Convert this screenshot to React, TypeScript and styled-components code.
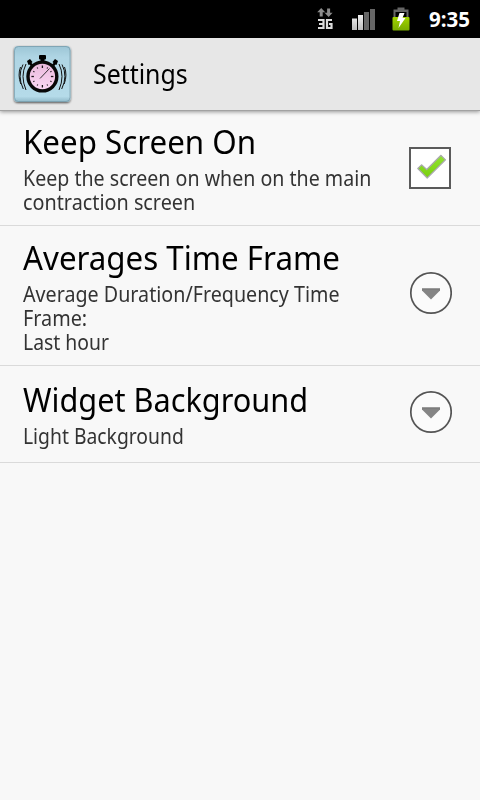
import React from 'react';
import styled, { createGlobalStyle } from 'styled-components';

const GlobalStyle = createGlobalStyle`
  * { box-sizing: border-box; }
  body { margin: 0; background: #f8f8f8; font-family: "Noto Sans", "Open Sans", sans-serif; }
`;

const Screen = styled.div`
  width: 480px;
  height: 800px;
  background: #f8f8f8;
  overflow: hidden;
  display: flex;
  flex-direction: column;
`;

const StatusBar = styled.div`
  height: 38px;
  flex: none;
  background: #000;
  display: flex;
  align-items: center;
  padding-left: 314px;
`;

const StatusIcons = styled.svg`
  display: block;
  flex: none;
`;

const Clock = styled.span`
  margin-left: 11px;
  color: #fff;
  font: 700 20.5px/38px "Open Sans", sans-serif;
  white-space: nowrap;
`;

const Header = styled.header`
  height: 73px;
  flex: none;
  background: #e7e7e7;
  border-bottom: 1px solid #a2a2a2;
  box-shadow: 0 1px 4px rgba(0, 0, 0, 0.4);
  display: flex;
  align-items: center;
  padding-left: 10px;
`;

const AppIcon = styled.svg`
  display: block;
  flex: none;
  margin-right: 19px;
`;

const Line = styled.span<{ $squeeze: number }>`
  display: block;
  width: max-content;
  white-space: nowrap;
  transform: scaleX(${(p) => p.$squeeze});
  transform-origin: 0 50%;
`;

const Heading = styled.h1`
  margin: 0;
  font-size: 27px;
  line-height: 36px;
  font-weight: 400;
  color: #000;
`;

const List = styled.main`
  display: flex;
  flex-direction: column;
`;

const Row = styled.section<{ $height: number }>`
  height: ${(p) => p.$height}px;
  flex: none;
  border-bottom: 1px solid #dadada;
  display: flex;
  align-items: center;
  justify-content: space-between;
  padding: 0 28px 0 23px;
`;

const Texts = styled.div<{ $drop: number }>`
  width: 360px;
  margin-top: ${(p) => p.$drop}px;
`;

const Title = styled.h2`
  margin: 0;
  padding-bottom: 5px;
  font-size: 33px;
  line-height: 36px;
  font-weight: 400;
  color: #000;
`;

const Summary = styled.div`
  font-size: 22px;
  line-height: 24px;
  color: #333;
`;

const Control = styled.svg<{ $lift?: number }>`
  display: block;
  flex: none;
  margin-bottom: ${(p) => p.$lift ?? 0}px;
`;

type Text = [string, number];

function StatusGlyphs() {
  return (
    <StatusIcons width="104" height="38" viewBox="314 0 104 38">
      <defs>
        <linearGradient id="charge" x1="0" y1="0" x2="0" y2="1">
          <stop offset="0" stopColor="#a2d400" />
          <stop offset="1" stopColor="#79ac00" />
        </linearGradient>
        <linearGradient id="bar" x1="0" y1="0" x2="0" y2="1">
          <stop offset="0" stopColor="#f0f0f0" />
          <stop offset="1" stopColor="#bdbdbd" />
        </linearGradient>
      </defs>
      <path d="M321.200 8l4 4.200h-2.500v4.200h-3v-4.200h-2.500z M328.600 17l-4-4.200h2.500v-4.200h3v4.200h2.500z" fill="#8b8b8b" />
      <path d="M318 20h5.500v8h-5.500 M319 24h4.500 M332 20h-5v8h4.500v-4h-2.500" fill="none" stroke="#dcdcdc" strokeWidth="2.200" />
      <path d="M352 18.500h5v11.500h-5z M358 15h5v15h-5z" fill="url(#bar)" />
      <path d="M364 12h5v18h-5z M370 9h5v21h-5z" fill="#666" />
      <path d="M397.500 9.500v-2h7v2h4v7.500h-2v-5h-11v5h-2v-7.500z" fill="#666" />
      <rect x="392.500" y="17" width="17" height="13.500" rx="1" fill="url(#charge)" />
      <path d="M399.500 13h5l-2 5h3l-7 10 1.500-7h-3z" fill="#fff" />
    </StatusIcons>
  );
}

function Stopwatch() {
  const ticks = Array.from({ length: 12 }, (_, i) => i * 30);
  return (
    <AppIcon width="64" height="64" viewBox="10 42 64 64">
      <defs>
        <linearGradient id="tile" x1="0" y1="0" x2="0" y2="1">
          <stop offset="0" stopColor="#9cc5d5" />
          <stop offset="0.2" stopColor="#afd5e4" />
          <stop offset="0.9" stopColor="#b5dbe9" />
          <stop offset="1" stopColor="#8fb8c8" />
        </linearGradient>
        <linearGradient id="face" x1="0" y1="0" x2="0" y2="1">
          <stop offset="0" stopColor="#e9b9dc" />
          <stop offset="1" stopColor="#fbd8f4" />
        </linearGradient>
        <filter id="tileShadow" x="-20%" y="-20%" width="140%" height="140%">
          <feDropShadow dx="0" dy="1" stdDeviation="1.200" floodOpacity="0.65" />
        </filter>
      </defs>
      <rect x="14" y="46" width="56.500" height="56" rx="4" fill="url(#tile)" filter="url(#tileShadow)" />
      <rect x="14.500" y="46.500" width="55.500" height="55" rx="4" fill="none" stroke="#6c8f9e" strokeOpacity="0.6" />
      <rect x="39" y="55" width="7" height="4.500" rx="1" />
      <path d="M40.500 59h4v4h-4z" />
      <path d="M27 61l3-2 2.500 3-1 1 2.500 2.500-2 2-2.500-3-1 .500z M58 61l-3-2-2.500 3 1 1-2.500 2.500 2 2 2.500-3 1 .500z" />
      <circle cx="42.400" cy="76.500" r="14.400" fill="url(#face)" stroke="#080808" strokeWidth="3.400" />
      {ticks.map((a) => (
        <path
          key={a}
          d={a % 90 === 0 ? 'M42.400 65.500v2.500' : 'M42.400 66v1.300'}
          stroke="#1a1418"
          strokeWidth={a % 90 === 0 ? 1.3 : 1.1}
          transform={`rotate(${a} 42.400 76.500)`}
        />
      ))}
      <path d="M40 78.500l9.500-10" stroke="#222" strokeWidth="0.9" />
      <path d="M26 64q-6 12 0 26 M23 64.500q-6 11.500 .300 24.500 M20.500 67q-3 8 .300 17 M59 64q6 12 0 26 M62 64.500q6 11.500-.300 24.500 M64.500 67q3 8-.300 17" fill="none" stroke="#111" strokeWidth="1" />
    </AppIcon>
  );
}

function Checkbox() {
  return (
    <Control width="44" height="44" viewBox="408 146 44 44">
      <defs>
        <linearGradient id="tick" x1="0" y1="0" x2="0" y2="1">
          <stop offset="0" stopColor="#92e235" />
          <stop offset="1" stopColor="#79cf0c" />
        </linearGradient>
      </defs>
      <rect x="410" y="148" width="40" height="40" fill="#fff" stroke="#5b5b5b" strokeWidth="2" />
      <path d="M417.800 168.500l3.700-3.700 5.200 4.700 14.300-14.200 4.500 4.500-18.300 18.200z" fill="url(#tick)" stroke="#aaa9ae" strokeWidth="1.200" strokeLinejoin="round" />
    </Control>
  );
}

function DropButton() {
  return (
    <Control $lift={5} width="44" height="44" viewBox="0 0 44 44">
      <circle cx="23" cy="22" r="20.200" fill="#fbfbfb" stroke="#555" strokeWidth="1.700" />
      <path d="M14 17.500h18v2l-9 9-9-9z" fill="#858585" />
      <path d="M14 18h18" stroke="#777" />
    </Control>
  );
}

interface SettingProps {
  height: number;
  title: Text;
  lines: Text[];
  drop?: number;
  children: React.ReactNode;
}

function Setting({ height, title, lines, drop = 0, children }: SettingProps) {
  return (
    <Row $height={height}>
      <Texts $drop={drop}>
        <Title>
          <Line $squeeze={title[1]}>{title[0]}</Line>
        </Title>
        <Summary>
          {lines.map(([text, squeeze]) => (
            <Line key={text} $squeeze={squeeze}>{text}</Line>
          ))}
        </Summary>
      </Texts>
      {children}
    </Row>
  );
}

export default function App() {
  return (
    <Screen>
      <GlobalStyle />
      <StatusBar>
        <StatusGlyphs />
        <Clock>9:35</Clock>
      </StatusBar>
      <Header>
        <Stopwatch />
        <Heading>
          <Line $squeeze={0.922}>Settings</Line>
        </Heading>
      </Header>
      <List>
        <Setting
          height={115}
          title={['Keep Screen On', 0.948]}
          lines={[['Keep the screen on when on the main', 0.891], ['contraction screen', 0.9]]}
        >
          <Checkbox />
        </Setting>
        <Setting
          height={140}
          drop={2}
          title={['Averages Time Frame', 0.948]}
          lines={[['Average Duration/Frequency Time', 0.895], ['Frame:', 0.9], ['Last hour', 0.88]]}
        >
          <DropButton />
        </Setting>
        <Setting height={97} title={['Widget Background', 0.93]} lines={[['Light Background', 0.878]]}>
          <DropButton />
        </Setting>
      </List>
    </Screen>
  );
}
